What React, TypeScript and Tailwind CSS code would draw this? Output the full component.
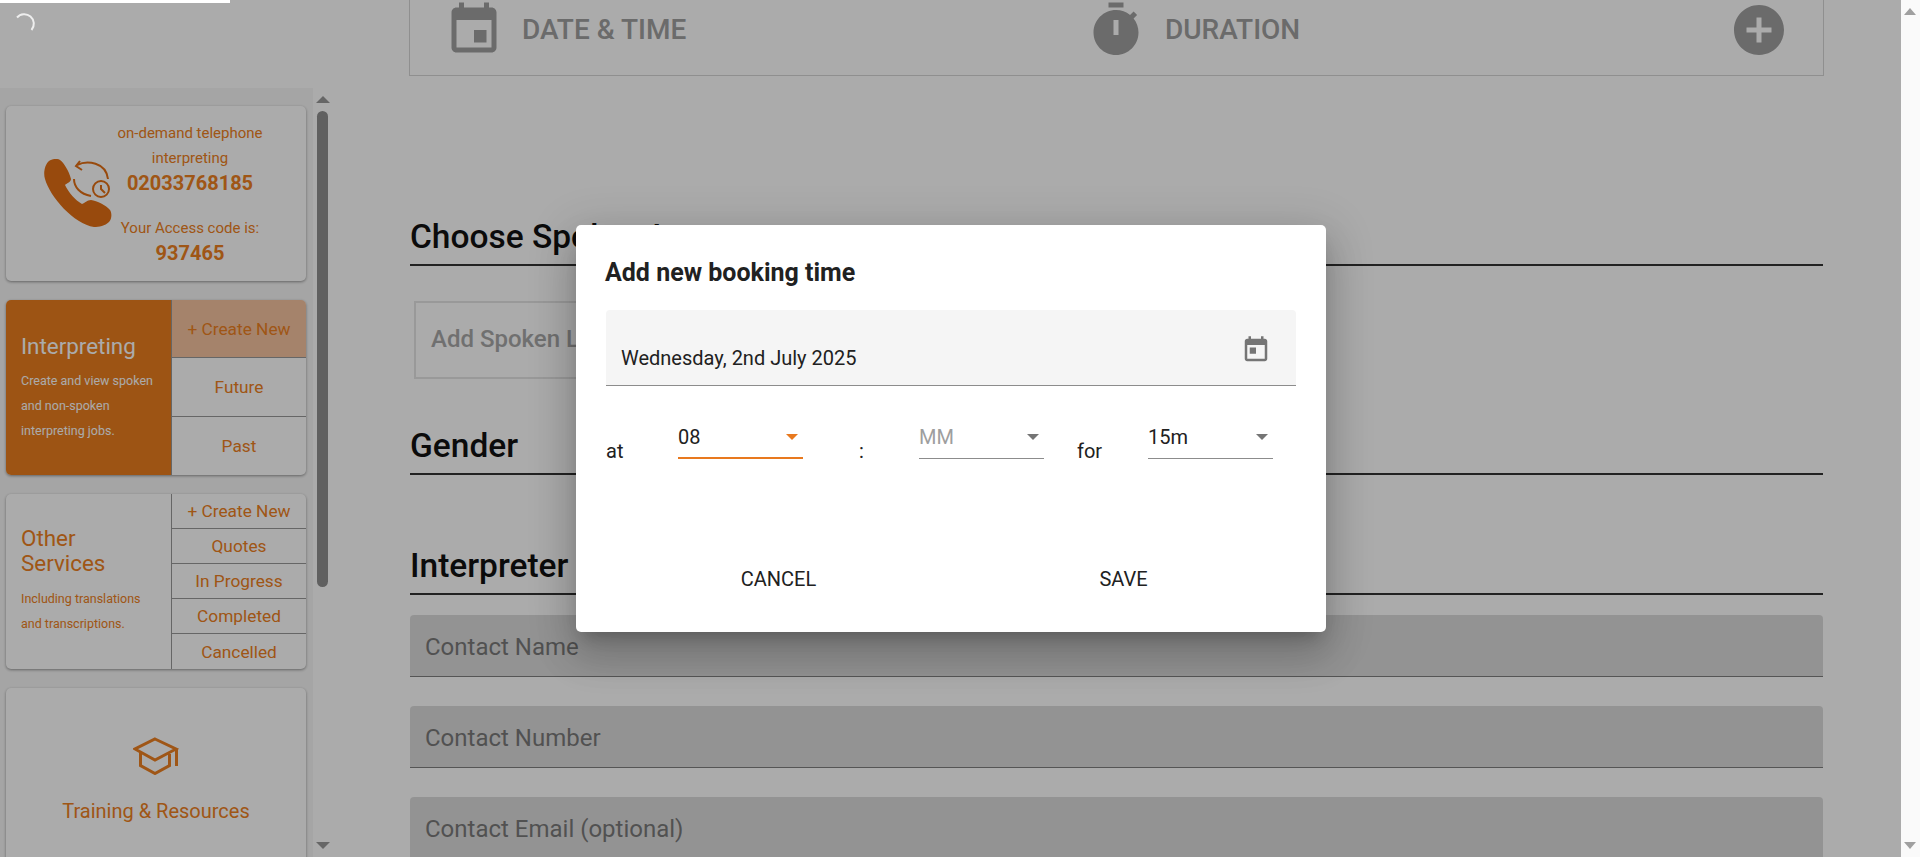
const font = "font-['Roboto','Liberation_Sans',sans-serif]";

function Arrow({ color = "border-t-[#757575]" }: { color?: string }) {
  return <span className={`absolute right-[5px] top-[17px] h-0 w-0 border-x-[6px] border-t-[6px] border-x-transparent ${color}`} />;
}

function SideLink({ label, active, tall }: { label: string; active?: boolean; tall?: boolean }) {
  return (
    <div
      className={`flex items-center justify-center border-b border-[#999] pt-[2px] text-[17.3px] text-[#ee8022] last:border-b-0 ${
        tall ? "h-[58.33px]" : "h-[35px]"
      } ${active ? "bg-[#f7c4a0]" : ""}`}
    >
      {label}
    </div>
  );
}

function PhoneIcon() {
  return (
    <svg width="70" height="70" viewBox="0 0 70 70" className="shrink-0">
      <path
        d="M5 2C8 0 13-1 16 1c4 3 9 11 11 19 0 3-4 4-6 6 4 8 10 15 17 19 3-1 5-4 9-4 6 1 15 5 19 10 2 3 2 9-1 12-4 4-10 5-15 5C30 65 6 38 1 20-1 14 1 5 5 2z"
        fill="#e36f14"
      />
      <g fill="none" stroke="#e36f14" strokeWidth="2">
        <path d="M33 6c10-5 29-3 31 14" />
        <path d="M36 2l-4 5 6 4" />
        <path d="M30 20c0 8 6 15 17 17" />
        <circle cx="57" cy="30" r="8" />
        <path d="M57 26v4l4 4" />
      </g>
    </svg>
  );
}

function Heading({ children }: { children: React.ReactNode }) {
  return <div className="border-b-2 border-[#333] pb-[7px] text-[33.5px] font-medium leading-[40px] text-[#111]">{children}</div>;
}

function ContactField({ label }: { label: string }) {
  return (
    <div className="flex h-[62px] items-center rounded-t-[4px] border-b border-[#7f7f7f] bg-[#dcdcdc] pl-[15px] pt-[2px] text-[24px] text-[#7a7a7a]">
      {label}
    </div>
  );
}

export default function App() {
  return (
    <div className={`relative h-[857px] overflow-hidden bg-white ${font}`}>
      <div className="flex h-full">
        {/* left rail */}
        <aside className="flex w-[331px] shrink-0 flex-col">
          <div className="h-[88px]" />
          <div className="relative flex min-h-0 flex-1">
            <div className="flex w-[313px] shrink-0 flex-col gap-[19px] overflow-hidden bg-[#f7f7f7] pl-[6px] pr-[7px] pt-[18px]">
              <div className="flex h-[175px] shrink-0 items-center rounded-[5px] bg-white pl-[38px] shadow-[0_1px_3px_rgba(0,0,0,0.4)]">
                <PhoneIcon />
                <div className="w-[152px] text-center text-[#ee8022]">
                  <div className="text-[15px] leading-[25px]">on-demand telephone interpreting</div>
                  <div className="text-[20px] font-bold leading-[25px]">02033768185</div>
                  <div className="mt-[20px] text-[15px] leading-[25px]">Your Access code is:</div>
                  <div className="text-[20px] font-bold leading-[25px]">937465</div>
                </div>
              </div>

              <div className="flex h-[175px] shrink-0 overflow-hidden rounded-[5px] bg-white shadow-[0_1px_3px_rgba(0,0,0,0.4)]">
                <div className="w-[166px] border-r border-[#999] bg-[#ea7e1e] pl-[15px] pt-[31px] text-white">
                  <div className="text-[22.4px] leading-[30px]">Interpreting</div>
                  <div className="mt-[7px] text-[12.5px] leading-[25px]">Create and view spoken and non-spoken interpreting jobs.</div>
                </div>
                <div className="flex-1">
                  <SideLink label="+ Create New" active tall />
                  <SideLink label="Future" tall />
                  <SideLink label="Past" tall />
                </div>
              </div>

              <div className="flex h-[175px] shrink-0 overflow-hidden rounded-[5px] bg-white shadow-[0_1px_3px_rgba(0,0,0,0.4)]">
                <div className="w-[166px] border-r border-[#999] pl-[15px] pr-[20px] pt-[32px] text-[#ee8022]">
                  <div className="text-[22.4px] leading-[25px]">Other<br />Services</div>
                  <div className="mt-[10px] text-[12.5px] leading-[25px]">Including translations and transcriptions.</div>
                </div>
                <div className="flex-1">
                  {["+ Create New", "Quotes", "In Progress", "Completed", "Cancelled"].map((l) => (
                    <SideLink key={l} label={l} />
                  ))}
                </div>
              </div>

              <div className="flex h-[200px] shrink-0 flex-col items-center rounded-[5px] bg-white pt-[49px] shadow-[0_1px_3px_rgba(0,0,0,0.4)]">
                <svg width="46" height="38" viewBox="0 0 46 38" fill="none" stroke="#ee8022" strokeWidth="3">
                  <path d="M22 2 43 12 22 23 2 12z" />
                  <path d="M7.500 15v13.500L22 36.500l14.500-8V17" />
                  <path d="M43.500 12v17" />
                </svg>
                <div className="mt-[21px] text-[20px] text-[#ee8022]">Training &amp; Resources</div>
              </div>
            </div>
            {/* scrollbar */}
            <div className="relative w-[18px] shrink-0">
              <span className="absolute left-[3px] top-[8px] h-0 w-0 border-x-[7px] border-b-[7px] border-x-transparent border-b-[#999]" />
              <div className="absolute left-[4px] top-[23px] h-[476px] w-[11px] rounded-full bg-[#8f8f8f]" />
              <span className="absolute bottom-[8px] left-[3px] h-0 w-0 border-x-[7px] border-t-[7px] border-x-transparent border-t-[#999]" />
            </div>
          </div>
        </aside>

        {/* main form */}
        <main className="w-[1492px] shrink-0 pl-[79px]">
          <div className="-mx-px flex h-[76px] items-center border border-t-0 border-[#d6d6d6] pb-[15px] pl-[34px] pr-[34px] text-[#a0a0a0]">
            <svg width="60" height="60" viewBox="0 0 24 24" fill="#a0a0a0" className="shrink-0">
              <path d="M17 12h-5v5h5v-5zM16 1v2H8V1H6v2H5c-1.110 0-1.990.9-1.990 2L3 19c0 1.100.89 2 2 2h14c1.100 0 2-.9 2-2V5c0-1.100-.9-2-2-2h-1V1h-2zm3 18H5V8h14v11z" />
            </svg>
            <span className="ml-[18px] w-[564px] text-[28px] font-medium">DATE &amp; TIME</span>
            <svg width="60" height="60" viewBox="0 0 24 24" fill="#a0a0a0" className="shrink-0">
              <path fillRule="evenodd" d="M15 1H9v2h6V1zm4.030 6.390 1.420-1.420c-.43-.51-.9-.99-1.410-1.410l-1.420 1.420C16.070 4.740 14.120 4 12 4c-4.970 0-9 4.030-9 9s4.020 9 9 9 9-4.030 9-9c0-2.120-.74-4.070-1.970-5.610zM13 14h-2V8h2v6z" />
            </svg>
            <span className="ml-[19px] flex-1 text-[28px] font-medium">DURATION</span>
            <svg width="60" height="60" viewBox="0 0 24 24" fill="#a0a0a0" className="shrink-0">
              <path d="M12 2C6.480 2 2 6.480 2 12s4.480 10 10 10 10-4.480 10-10S17.520 2 12 2zm5 11h-4v4h-2v-4H7v-2h4V7h2v4h4v2z" />
            </svg>
          </div>

          <div className="mt-[141px]"><Heading>Choose Spoken Language</Heading></div>
          <div className="ml-[4px] mt-[35px] flex h-[78px] w-[360px] items-center border-2 border-[#e5e5e5] pb-[2px] pl-[15px] text-[24px] font-medium text-[#a8a8a8]">Add Spoken Language</div>
          <div className="mt-[47px]"><Heading>Gender</Heading></div>
          <div className="mt-[71px]"><Heading>Interpreter Contact Details</Heading></div>
          <div className="mt-[20px] flex flex-col gap-[29px]">
            <ContactField label="Contact Name" />
            <ContactField label="Contact Number" />
            <ContactField label="Contact Email (optional)" />
          </div>
        </main>
      </div>

      {/* backdrop */}
      <div className="absolute inset-y-0 left-0 right-[19px] bg-black/33" />
      <div className="absolute left-0 top-0 h-[3px] w-[230px] bg-white" />
      <svg width="24" height="24" viewBox="0 0 24 24" fill="none" stroke="#eeeeee" strokeWidth="2" className="absolute left-[13px] top-[11px]">
        <path d="M4 6.500A9.500 9.500 0 1 1 18.500 19" />
      </svg>

      {/* dialog */}
      <div className="absolute left-[576px] top-[225px] h-[407px] w-[750px] rounded-[5px] bg-white px-[30px] pt-[32px] shadow-[0_11px_15px_-7px_rgba(0,0,0,0.2),0_24px_38px_3px_rgba(0,0,0,0.14),0_9px_46px_8px_rgba(0,0,0,0.12)]">
        <h2 className="-ml-px text-[25px] font-bold leading-[32px] text-[#212121]">Add new booking time</h2>
        <div className="relative mt-[21px] flex h-[76px] items-end rounded-t-[4px] border-b border-[#8c8c8c] bg-[#f5f5f5] pb-[12px] pl-[15px] text-[20px] text-[#212121]">
          Wednesday, 2nd July 2025
          <svg width="30" height="30" viewBox="0 0 24 24" fill="#757575" className="absolute right-[25px] top-[25px]">
            <path d="M19 3h-1V1h-2v2H8V1H6v2H5c-1.110 0-1.990.9-1.990 2L3 19c0 1.100.89 2 2 2h14c1.100 0 2-.9 2-2V5c0-1.100-.9-2-2-2zm0 16H5V8h14v11zM7 10h5v5H7z" />
          </svg>
        </div>
        <div className="mt-[31px] flex items-end text-[20px] text-[#212121]">
          <span className="-mb-[4px] w-[72px] leading-[24px]">at</span>
          <div className="relative h-[42px] w-[125px] border-b-2 border-[#e8791e] leading-[40px]">08<Arrow color="border-t-[#e8791e]" /></div>
          <span className="-mb-[4px] ml-[56px] w-[60px] leading-[24px]">:</span>
          <div className="relative h-[42px] w-[125px] border-b border-[#8c8c8c] leading-[40px] text-[#9e9e9e]">MM<Arrow /></div>
          <span className="-mb-[4px] ml-[33px] w-[71px] leading-[24px]">for</span>
          <div className="relative h-[42px] w-[125px] border-b border-[#8c8c8c] leading-[40px]">15m<Arrow /></div>
        </div>
        <div className="mt-[108px] grid grid-cols-2 text-center text-[20px] leading-[24px] text-[#212121]">
          <span>CANCEL</span>
          <span>SAVE</span>
        </div>
      </div>

      {/* page scrollbar */}
      <div className="absolute right-0 top-0 h-full w-[19px] bg-[#fafafa]">
        <span className="absolute left-[3px] top-[8px] h-0 w-0 border-x-[6px] border-b-[7px] border-x-transparent border-b-[#a0a0a0]" />
        <span className="absolute bottom-[8px] left-[3px] h-0 w-0 border-x-[6px] border-t-[7px] border-x-transparent border-t-[#a0a0a0]" />
      </div>
    </div>
  );
}
